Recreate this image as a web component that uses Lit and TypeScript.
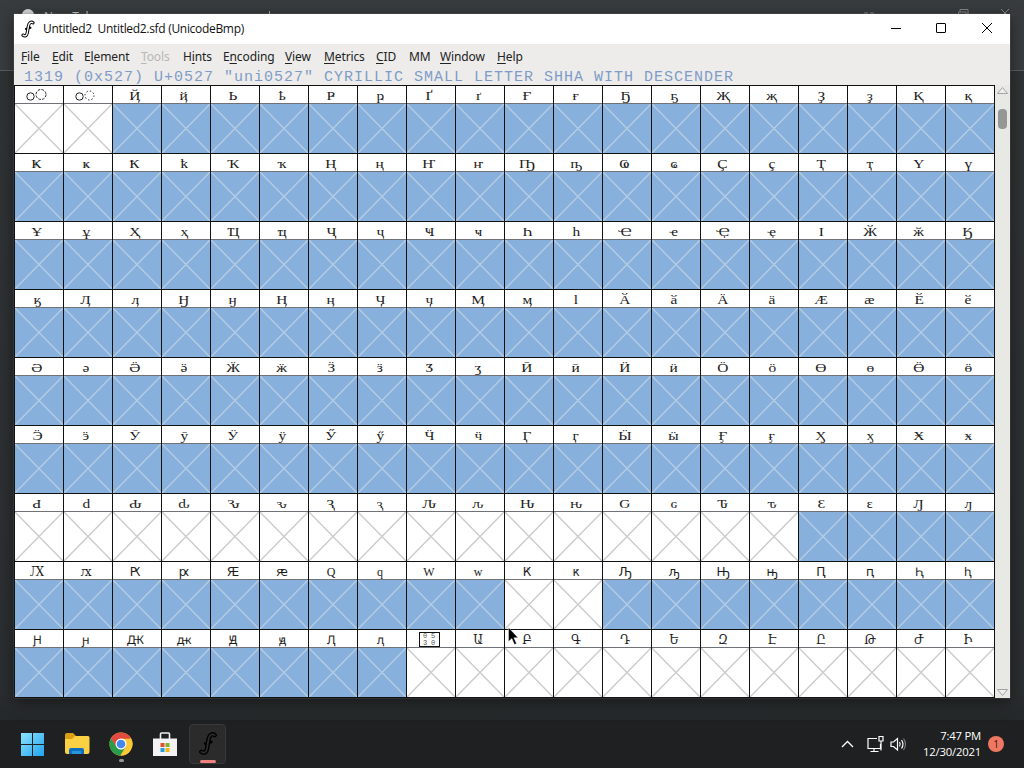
import { LitElement, html, css, svg, nothing } from "lit";
import { customElement } from "lit/decorators.js";
import { classMap } from "lit/directives/class-map.js";

const FIRST = 0x488;
const COLUMNS = 20;
const ROWS = 9;
const MENUS: [string, number][] = [
  ["File", 31], ["Edit", 32], ["Element", 57], ["Tools", 42], ["Hints", 40], ["Encoding", 62],
  ["View", 39], ["Metrics", 52], ["CID", 33], ["MM", 31], ["Window", 57], ["Help", 40],
];
const ACCESS: Record<string, number> = { Element: 1, Hints: 1, Encoding: 1 };

// Index ranges (inclusive) of the cells that are not selected.
const UNSELECTED: [number, number][] = [[0, 1], [120, 135], [150, 151], [168, 179]];
const isSelected = (i: number) => !UNSELECTED.some(([a, b]) => i >= a && i <= b);

const fontMark = (fill: string) => svg`
  <g fill="none" stroke-linecap="round"><g stroke="#000" stroke-width="4"><path d="M3 18.500c2 1.500 4.500 1 5-2.500l1.500-8.500C10.200 3 13 1.800 15 3.500"/><path d="M6.500 11l5.500-1.500" stroke-width="2.500"/></g>
  <path d="M3 18.500c2 1.500 4.500 1 5-2.500l1.500-8.500C10.200 3 13 1.800 15 3.500" stroke=${fill} stroke-width="1.600"/></g>`;

@customElement("glyph-cell")
export class GlyphCell extends LitElement {
  static properties = { code: { type: Number }, selected: { type: Boolean } };
  declare code: number;
  declare selected: boolean;

  static styles = css`
    :host { display: block; box-sizing: border-box; border-left: 1px solid #111; border-top: 1px solid #111; overflow: hidden; }
    .label { display: flow-root; height: 17px; box-sizing: border-box; padding-right: 4px; background: #fff; color: #1c1c1c;
      font: 13.500px/19px "Liberation Serif", "DejaVu Serif", "DejaVu Sans", serif; text-align: center; white-space: nowrap; }
    .glyph { display: inline-block; height: 17px; transform: scaleX(1.14); }
    .label.extended { font-size: 12px; line-height: 20px; }
    .label.extended .glyph { transform: none; }
    .label svg { display: block; margin: 0 auto; }
    .missing { display: grid; grid-template-columns: 8px 8px; justify-content: center; width: 21px; height: 15px; box-sizing: border-box;
      border: 1px solid #111; margin: 2px auto 0; font: 7px/6.5px "Liberation Mono", monospace; color: #555; }
    .box { height: 50px; box-sizing: border-box; border-top: 1px solid #6f7378; background: #fff; color: #cbcbcb; }
    .box.on { background: #87b0dc; color: #b6cce4; }
    .box svg { display: block; }
  `;

  private label() {
    if (this.code === 0x488) {
      return html`<svg width="22" height="17"><g fill="none" stroke="#222"><circle cx="4.500" cy="10.500" r="3.700"/><circle cx="15" cy="8.500" r="5" stroke-dasharray="2.600 1.300"/></g></svg>`;
    }
    if (this.code === 0x489) {
      return html`<svg width="22" height="17"><g fill="none" stroke="#222"><circle cx="4.500" cy="10.500" r="3.700"/><circle cx="14.500" cy="9.500" r="4.500" stroke-dasharray="1.400 2.100"/></g></svg>`;
    }
    if (this.code === 0x530) {
      return html`<div class="missing"><span>0</span><span>5</span><span>3</span><span>0</span></div>`;
    }
    return html`<span class="glyph">${String.fromCodePoint(this.code)}</span>`;
  }

  render() {
    return html`
      <div class=${classMap({ label: true, extended: this.code > 0x513 })}>${this.label()}</div>
      <div class=${classMap({ box: true, on: this.selected })}>
        <svg width="48" height="49"><path d="M0 0L48 49M48 0L0 49" stroke="currentColor" stroke-width="1.400"/></svg>
      </div>`;
  }
}

@customElement("task-bar")
export class TaskBar extends LitElement {
  static styles = css`
    :host { display: flex; height: 48px; background: #1f2021; color: #fff; font-family: "Open Sans", "Noto Sans", sans-serif; justify-content: space-between; }
    .apps { display: flex; padding-left: 14px; gap: 8px; }
    .app { width: 36px; display: flex; flex-direction: column; align-items: center; box-sizing: border-box; padding-top: 12px; height: 44px; }
    .app:first-child { margin-right: 1px; }
    .app svg { display: block; flex: none; }
    .run { width: 5px; height: 3px; border-radius: 2px; background: #999; margin-top: 3px; }
    .app.active { background: #2b2b2b; border: 1px solid #393939; border-radius: 4px; height: 40px; margin: 4px 0 0 -2px; width: 37px; padding-top: 6px; }
    .active .run { width: 16px; background: #f08080; margin-top: 4px; }
    .tray { display: flex; align-items: center; padding-right: 20px; }
    .tray svg { display: block; }
    .caret { margin-right: 13px; }
    .net { margin-right: 6px; }
    .clock { width: 75px; text-align: right; font-size: 11.300px; line-height: 16px; letter-spacing: -0.2px; white-space: nowrap; }
    .badge { width: 16px; height: 16px; border-radius: 50%; background: #ee7862; color: #3a1410; font-size: 10px; line-height: 16px; text-align: center; margin-left: 7px; }
  `;

  render() {
    return html`
      <div class="apps">
        <div class="app"><svg width="24" height="24" viewBox="0 0 24 24"><defs><linearGradient id="w" x1="0" y1="0" x2="1" y2="1"><stop offset="0" stop-color="#8fe3fd"/><stop offset="1" stop-color="#20a3ee"/></linearGradient></defs><path fill="url(#w)" d="M1 1h11v11H1zM13 1h11v11H13zM1 13h11v11H1zM13 13h11v11H13z"/></svg></div>
        <div class="app"><svg width="26" height="24" viewBox="0 0 26 24"><path fill="#d9a013" d="M1 3q0-2 2-2h6l3 3v5H1z"/><path fill="#fbd043" d="M1 7h7l3-3h13q1.500 0 1.500 1.500V20q0 2-2 2H3q-2 0-2-2z"/><path fill="#0f6fc0" d="M5 22v-4q0-2 2-2h11q2 0 2 2v4z"/><path fill="#2996dc" d="M8 19h9v3H8z"/></svg></div>
        <div class="app"><svg width="24" height="24" viewBox="0 0 24 24"><circle cx="12" cy="12" r="11.500" fill="#fcc934"/><path fill="#e04a3f" d="M12 12H22.500A11.500 11.500 0 0 0 2 6.300L7 15z"/><path fill="#e04a3f" d="M12 6.500h10.100A11.500 11.500 0 0 0 2 6.300z"/><path fill="#fcc934" d="M12 6.800h10.200A11.500 11.500 0 0 1 11.300 23.500L16.700 14.600z"/><path fill="#2a9a4b" d="M2 6.300A11.500 11.500 0 0 0 11.300 23.500L16.700 14.700 12 17.400 7.200 14.700z"/><circle cx="12" cy="12" r="5.500" fill="#fff"/><circle cx="12" cy="12" r="4.300" fill="#4587ee"/></svg><div class="run"></div></div>
        <div class="app"><svg width="24" height="24" viewBox="0 0 24 24"><path d="M7.500 7V2q0-1 1-1h7q1 0 1 1v5" fill="none" stroke="#eee" stroke-width="1.600"/><path fill="#f4f2f5" d="M0 6.500h24V24H0z"/><path fill="#e2502f" d="M7.500 11h4v4h-4z"/><path fill="#7db52a" d="M12.500 11h4v4h-4z"/><path fill="#249fdd" d="M7.500 16h4v4h-4z"/><path fill="#f6b511" d="M12.500 16h4v4h-4z"/></svg></div>
        <div class="app active"><svg width="20" height="25" viewBox="0 0 18 22">${fontMark("#2b2b2b")}</svg><div class="run"></div></div>
      </div>
      <div class="tray">
        <svg class="caret" width="13" height="8"><path d="M1 7l5.500-5.500L12 7" fill="none" stroke="#fff" stroke-width="1.300"/></svg>
        <svg class="net" width="17" height="18"><g fill="none" stroke="#fff" stroke-width="1.200"><path d="M10 3.500H1v10h12.500V9M7 13.500v3M3.500 16.500h8"/><path d="M12 1.500h4v4.500h-4zM14 6v9.500"/></g></svg>
        <svg width="16" height="16"><g fill="none" stroke="#fff" stroke-width="1.200"><path d="M1 6v4.500h2.500L7.500 14V2.500L3.500 6z"/><path d="M9.500 6q1.500 2.200 0 4.500M11.500 4q3 4.200 0 8.500"/><path d="M13.500 2.500q4 5.700 0 11.500" stroke="#777"/></g></svg>
        <div class="clock">7:47 PM<br />12/30/2021</div>
        <div class="badge">1</div>
      </div>`;
  }
}

@customElement("app-root")
export class AppRoot extends LitElement {
  static styles = css`
    :host { display: flex; flex-direction: column; position: relative; width: 1024px; height: 768px; overflow: hidden; background: #2f3234; }
    .behind { flex: none; height: 720px; background: linear-gradient(#393c3e 0 70px, #303335 71px, #2b2e30 690px, #252829); }
    .tabs { height: 14px; overflow: hidden; color: #c8c8c8; font: 12px/16px "Open Sans", sans-serif; display: flex; padding: 9px 0 0 22px; box-sizing: border-box; gap: 10px; }
    .tabs .dot { flex: none; width: 12px; height: 12px; border-radius: 50%; background: #ddd; }
    .tabs .plus { margin-left: 166px; width: 1px; background: #aaa; height: 5px; margin-top: 2px; }
    .tabs svg { margin-left: auto; }
    .rule { height: 56px; border-bottom: 1px solid #5a5e60; }
    .window { position: absolute; left: 14px; top: 14px; width: 996px; height: 684px; display: flex; flex-direction: column; background: #edecea; box-shadow: 0 0 1px 0 #888, 0 3px 14px rgba(0, 0, 0, .5); }
    .title { height: 30px; flex: none; display: flex; align-items: center; background: #fff; color: #111; font: 12px/28px "Open Sans", "Noto Sans", sans-serif; letter-spacing: -0.31px; }
    .title .mark { margin: 0 7px 0 6px; }
    .title .name { flex: 1; white-space: pre; }
    .title .buttons { display: block; }
    .menu { height: 26px; flex: none; display: flex; padding-left: 7px; font: 12px/25px "Noto Sans", sans-serif; letter-spacing: -0.12px; color: #222; white-space: nowrap; }
    .menu .dim { color: #b9b8b6; }
    .menu u { text-underline-offset: 2px; text-decoration-thickness: 1px; }
    .info { height: 15px; flex: none; padding-left: 10px; font: 15px/16px "Liberation Mono", monospace; letter-spacing: 0.998px; color: #7f9cc8; white-space: pre; }
    .work { display: flex; flex: 1; }
    .glyphs { width: 981px; height: 613px; box-sizing: border-box; display: grid; grid-template-columns: repeat(20, 49px); grid-auto-rows: 68px; border-right: 1px solid #111; border-bottom: 1px solid #111; }
    .scroll { width: 15px; display: flex; flex-direction: column; align-items: center; background: #e8e8e4; }
    .thumb { width: 9px; height: 20px; border-radius: 4px; background: #969696; margin: 13px 0 auto; }
    .scroll svg { display: block; }
    .pointer { position: absolute; left: 508px; top: 627px; }
  `;

  private menuItem([name, width]: [string, number]) {
    const at = ACCESS[name] ?? 0;
    const letter = name === "MM" ? name : html`${name.slice(0, at)}<u>${name[at]}</u>${name.slice(at + 1)}`;
    return html`<span class=${name === "Tools" ? "dim" : nothing} style="width:${width}px">${letter}</span>`;
  }

  render() {
    const cells = Array.from({ length: COLUMNS * ROWS }, (_, i) => i);
    return html`
      <div class="behind">
        <div class="tabs"><span class="dot"></span><span>New Tab</span><span class="plus"></span>
          <svg width="170" height="6"><g fill="none" stroke="#888"><path d="M10 4h4M16 4h4M104.500 6V3H112v3M106 3V.500h8V6M147 0l6 6M155 0l-6 6"/></g></svg></div>
        <div class="rule"></div>
      </div>
      <task-bar></task-bar>
      <div class="window">
        <div class="title">
          <svg class="mark" width="16" height="18" viewBox="0 0 18 22">${fontMark("#fff")}</svg>
          <span class="name">Untitled2  Untitled2.sfd (UnicodeBmp)</span>
          <svg class="buttons" width="120" height="30"><g fill="none" stroke="#000"><path d="M1 14.500h10M92 9l10 10M102 9l-10 10"/><rect x="46.500" y="9.500" width="9" height="9" rx=".5"/></g></svg>
        </div>
        <div class="menu">${MENUS.map((m) => this.menuItem(m))}</div>
        <div class="info">1319 (0x527) U+0527 "uni0527" CYRILLIC SMALL LETTER SHHA WITH DESCENDER</div>
        <div class="work">
          <div class="glyphs">${cells.map((i) => html`<glyph-cell .code=${FIRST + i} .selected=${isSelected(i)}></glyph-cell>`)}</div>
          <div class="scroll">
            <svg width="13" height="11"><path d="M1.500 8.500L6.500 2.500l5 6z" fill="#eee" stroke="#a5a5a0"/></svg>
            <div class="thumb"></div>
            <svg width="13" height="10"><path d="M1.500 1.500h10l-5 6z" fill="#eee" stroke="#a5a5a0"/></svg>
          </div>
        </div>
      </div>
      <svg class="pointer" width="13" height="20"><path d="M.5.500v14l3.300-3 2.700 6 2-1-2.600-5.800H10z" fill="#000" stroke="#fff" stroke-width=".4"/></svg>`;
  }
}
